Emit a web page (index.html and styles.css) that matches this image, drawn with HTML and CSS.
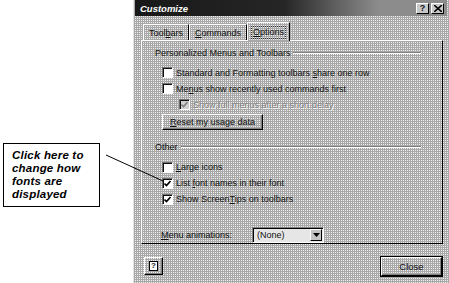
FILE: index.html
```html
<!DOCTYPE html>
<html lang="en">
<head>
  <meta charset="UTF-8">
  <title>Customize</title>
  <link rel="stylesheet" href="styles.css">
</head>
<body>

  <div class="page">
    <!-- Callout at the left -->
    <div class="note-area">
      <div class="note">Click here to<br>change how<br>fonts are<br>displayed</div>
    </div>

    <!-- Dialog -->
    <div class="dialog">
      <div class="titlebar">
        <span class="title">Customize</span>
        <div class="title-btns">
          <span class="tbtn">?</span>
          <span class="tbtn close-x">
            <svg width="8" height="7" viewBox="0 0 8 7"><path d="M0 0L8 7M8 0L0 7" stroke="#000" stroke-width="1.6"/></svg>
          </span>
        </div>
      </div>

      <div class="body">
        <div class="tabs">
          <div class="tab"><span>Tool<u>b</u>ars</span></div>
          <div class="tab"><span><u>C</u>ommands</span></div>
          <div class="tab active"><span class="focus"><u>O</u>ptions</span></div>
        </div>

        <div class="panel">
          <div class="group"><span>Personalized Menus and Toolbars</span><i class="rule"></i></div>
          <div class="row"><span class="box"></span><span>Standard and Formatting toolbars <u>s</u>hare one row</span></div>
          <div class="row"><span class="box"></span><span>Me<u>n</u>us show recently used commands first</span></div>
          <div class="row sub disabled"><span class="box checked"><svg width="7" height="7" viewBox="0 0 7 7"><path d="M0.5 3.5L2.5 5.5L6.5 1" fill="none" stroke="#808080" stroke-width="1.6"/></svg></span><span>Show full menus after a short delay</span></div>
          <div class="btn reset"><span><u>R</u>eset my usage data</span></div>

          <div class="group other"><span>Other</span><i class="rule"></i></div>
          <div class="row"><span class="box"></span><span><u>L</u>arge icons</span></div>
          <div class="row"><span class="box checked"><svg width="7" height="7" viewBox="0 0 7 7"><path d="M0.5 3.5L2.5 5.5L6.5 1" fill="none" stroke="#000" stroke-width="1.6"/></svg></span><span>List <u>f</u>ont names in their font</span></div>
          <div class="row"><span class="box checked"><svg width="7" height="7" viewBox="0 0 7 7"><path d="M0.5 3.5L2.5 5.5L6.5 1" fill="none" stroke="#000" stroke-width="1.6"/></svg></span><span>Show Screen<u>T</u>ips on toolbars</span></div>

          <div class="anim-row">
            <span class="anim-label"><u>M</u>enu animations:</span>
            <div class="select">
              <span class="sel-text">(None)</span>
              <span class="sel-btn"><svg width="7" height="4" viewBox="0 0 7 4"><path d="M0 0H7L3.5 4Z" fill="#000"/></svg></span>
            </div>
          </div>
        </div>

        <div class="footer">
          <div class="btn help"><span class="help-icon">?</span></div>
          <div class="btn close">Close</div>
        </div>
      </div>
    </div>
  </div>

  <!-- pointer line from the note to the checkbox -->
  <svg class="pointer" width="449" height="283" viewBox="0 0 449 283">
    <line x1="106" y1="155" x2="163" y2="181" stroke="#000" stroke-width="1"/>
  </svg>

</body>
</html>
```

FILE: styles.css
```css
body {
  margin: 0;
  width: 449px;
  height: 283px;
  overflow: hidden;
  position: relative;
  background-color: #ffffff;
  font-family: "Liberation Sans", Arial, sans-serif;
}

.page {
  display: flex;
  height: 283px;
}

.note-area {
  width: 133px;
  flex: none;
  padding: 143px 0 0 3px;
  box-sizing: border-box;
}

.note {
  width: 97px;
  height: 64px;
  box-sizing: border-box;
  border: 1px solid #000;
  padding: 5px 0 0 8px;
  font-size: 11.5px;
  line-height: 13px;
  font-weight: bold;
  font-style: italic;
  letter-spacing: 0.2px;
}

.dialog {
  width: 316px;
  height: 283px;
  box-sizing: border-box;
  border-left: 1px solid #e4e4e4;
  padding-left: 1px;
  display: flex;
  flex-direction: column;
  font-size: 9px;
  color: #111;
  background-color: #c0c0c0;
  background-image: repeating-conic-gradient(#eeeeee 0 25%, #a8a8a8 0 100%);
  background-size: 2px 2px;
}

.titlebar {
  height: 16px;
  margin-right: 2px;
  display: flex;
  align-items: center;
  justify-content: space-between;
  padding: 0 3px 0 5px;
  background: linear-gradient(90deg, #181818 0%, #262626 48%, #5e5e5e 64%, #8c8c8c 78%, #8c8c8c 100%);
}

.title {
  color: #fff;
  font-weight: bold;
  font-style: italic;
  font-size: 9.5px;
}

.title-btns {
  display: flex;
  gap: 2px;
}

.tbtn {
  width: 13px;
  height: 11px;
  box-sizing: border-box;
  display: flex;
  align-items: center;
  justify-content: center;
  background-color: #c8c8c8;
  border: 1px solid;
  border-color: #fff #000 #000 #fff;
  font-weight: bold;
  font-size: 9px;
  line-height: 9px;
}

.body {
  padding: 0 6px;
}

.tabs {
  display: flex;
  align-items: flex-end;
  height: 18px;
  margin-top: 6px;
  padding-left: 2px;
  position: relative;
  z-index: 1;
}

.tab {
  height: 16px;
  box-sizing: border-box;
  padding: 0 5px;
  display: flex;
  align-items: center;
  border-left: 1px solid #fff;
  border-top: 1px solid #fff;
  border-right: 1px solid #000;
}

.tab.active {
  height: 19px;
  margin-bottom: -1px;
  padding: 0 3px;
  background-color: #c0c0c0;
  background-image: repeating-conic-gradient(#eeeeee 0 25%, #a8a8a8 0 100%);
  background-size: 2px 2px;
}

.focus {
  border: 1px dotted #333;
  padding: 0 1px;
  line-height: 11px;
}

.panel {
  height: 204px;
  box-sizing: border-box;
  border: 1px solid;
  border-color: #fff #000 #000 #fff;
  padding: 6px 21px 0 13px;
  display: flex;
  flex-direction: column;
}

.group {
  display: flex;
  align-items: center;
  height: 12px;
  gap: 3px;
}

.group.other {
  margin-top: 11px;
}

.rule {
  flex: 1;
  height: 0;
  border-top: 1px solid #808080;
  border-bottom: 1px solid #fff;
}

.row {
  height: 16px;
  display: flex;
  align-items: center;
  padding-left: 7px;
}

.group + .row {
  margin-top: 6px;
}

.row.sub {
  padding-left: 24px;
}

.disabled {
  color: #808080;
  text-shadow: 1px 1px #fff;
}

.box {
  width: 11px;
  height: 11px;
  box-sizing: border-box;
  margin-right: 3px;
  border: 1px solid;
  border-color: #707070 #fff #fff #707070;
  box-shadow: inset 1px 1px #111;
  background-color: #fff;
  display: flex;
  align-items: center;
  justify-content: center;
}

.disabled .box {
  background-color: #d0d0d0;
}

.btn {
  box-sizing: border-box;
  display: flex;
  align-items: center;
  justify-content: center;
  border: 1px solid;
  border-color: #fff #000 #000 #fff;
  box-shadow: inset -1px -1px #808080;
}

.reset {
  width: 101px;
  height: 17px;
  margin: 1px 0 0 7px;
}

.anim-row {
  display: flex;
  align-items: center;
  height: 16px;
  margin-top: 20px;
  padding-left: 6px;
}

.anim-label {
  width: 91px;
}

.select {
  width: 72px;
  height: 16px;
  box-sizing: border-box;
  display: flex;
  align-items: center;
  border: 1px solid;
  border-color: #808080 #fff #fff #808080;
  box-shadow: inset 1px 1px #000;
  background-color: #e6e6e6;
  padding: 1px 1px 0 4px;
}

.sel-text {
  flex: 1;
}

.sel-btn {
  width: 12px;
  height: 12px;
  box-sizing: border-box;
  display: flex;
  align-items: center;
  justify-content: center;
  border: 1px solid;
  border-color: #fff #000 #000 #fff;
  background-color: #c4c4c4;
}

.footer {
  display: flex;
  justify-content: space-between;
  align-items: flex-start;
  margin-top: 13px;
  padding: 0 1px 0 3px;
}

.help {
  width: 19px;
  height: 18px;
}

.help-icon {
  width: 9px;
  height: 10px;
  box-sizing: border-box;
  border: 1px solid #000;
  background-color: #fff;
  font-weight: bold;
  font-size: 8px;
  line-height: 8px;
  text-align: center;
}

.close {
  width: 61px;
  height: 19px;
  outline: 1px solid #000;
  font-size: 9.5px;
}

.pointer {
  position: absolute;
  left: 0;
  top: 0;
  pointer-events: none;
}
```
